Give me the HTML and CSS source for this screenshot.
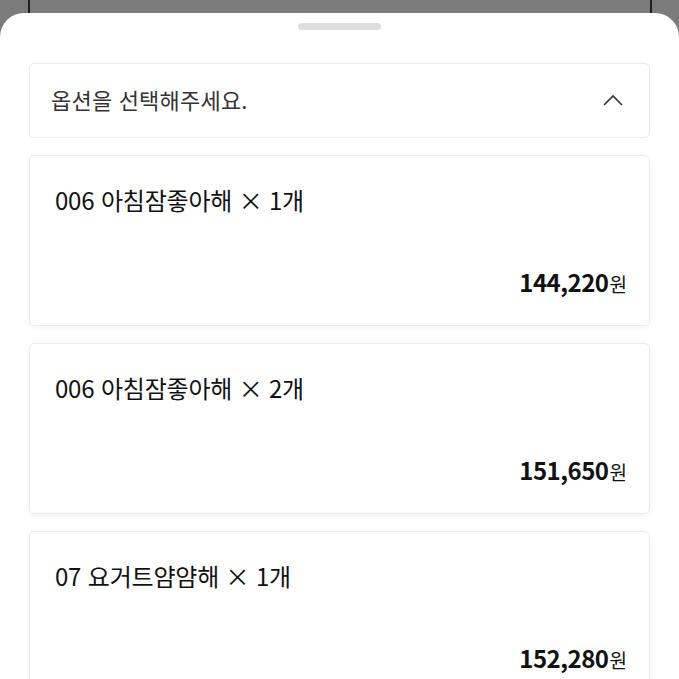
FILE: index.html
```html
<!DOCTYPE html>
<html lang="ko">
<head>
  <meta charset="UTF-8">
  <title>옵션 선택</title>
  <link rel="stylesheet" href="styles.css">
</head>
<body>

  <!-- Dimmed page behind the sheet -->
  <div class="backdrop">
    <div class="frame"></div>
  </div>

  <!-- Bottom sheet -->
  <div class="sheet">
    <div class="handle"></div>

    <div class="select">
      <span class="select-label">옵션을 선택해주세요.</span>
      <svg class="chevron" width="22" height="14" viewBox="0 0 22 14">
        <path d="M2 12 L11 3 L20 12" fill="none" stroke="#333" stroke-width="1.6"/>
      </svg>
    </div>

    <div class="options">
      <div class="card">
        <div class="card-title">006 아침잠좋아해 × 1개</div>
        <div class="card-price">144,220<span class="won">원</span></div>
      </div>
      <div class="card">
        <div class="card-title">006 아침잠좋아해 × 2개</div>
        <div class="card-price">151,650<span class="won">원</span></div>
      </div>
      <div class="card">
        <div class="card-title">07 요거트얌얌해 × 1개</div>
        <div class="card-price">152,280<span class="won">원</span></div>
      </div>
    </div>
  </div>

</body>
</html>
```

FILE: styles.css
```css
body {
  margin: 0;
  padding: 0;
  background-color: #7b7b7b;
  font-family: "Noto Sans CJK KR", "Noto Sans", sans-serif;
  color: #111;
  overflow: hidden;
  height: 679px;
}

.backdrop {
  height: 14px;
  padding: 0 27px 0 28px;
}

.frame {
  height: 100%;
  border-left: 2px solid #1e1e1e;
  border-right: 2px solid #1e1e1e;
}

.sheet {
  margin-top: -1px;
  background: #fff;
  border-radius: 24px 24px 0 0;
  height: 700px;
  padding: 10px 29px 0 29px;
}

.handle {
  width: 83px;
  height: 7px;
  margin: 0 auto;
  border-radius: 4px;
  background: #dedede;
}

.select {
  margin-top: 33px;
  height: 73px;
  border: 1px solid #ebebeb;
  border-radius: 5px;
  display: flex;
  align-items: center;
  justify-content: space-between;
  padding: 0 25px 0 21px;
}

.select-label {
  font-size: 22px;
  color: #333;
  margin-top: -3px;
  letter-spacing: 0.2px;
}

.chevron {
  margin-top: -1px;
}

.options {
  margin-top: 17px;
  display: flex;
  flex-direction: column;
  gap: 17px;
}

.card {
  height: 171px;
  box-sizing: border-box;
  border: 1px solid #ececec;
  border-radius: 5px;
  box-shadow: 0 2px 6px rgba(0, 0, 0, 0.05);
  padding: 28px 22px 0 25px;
  display: flex;
  flex-direction: column;
}

.card-title {
  font-size: 24px;
  line-height: 32px;
  color: #111;
  letter-spacing: -0.2px;
}

.card-price {
  margin-top: 50px;
  align-self: flex-end;
  font-size: 24px;
  font-weight: 700;
  line-height: 32px;
  letter-spacing: -0.5px;
}

.won {
  font-size: 19px;
  font-weight: 400;
  margin-left: 1px;
  letter-spacing: 0;
}
```
